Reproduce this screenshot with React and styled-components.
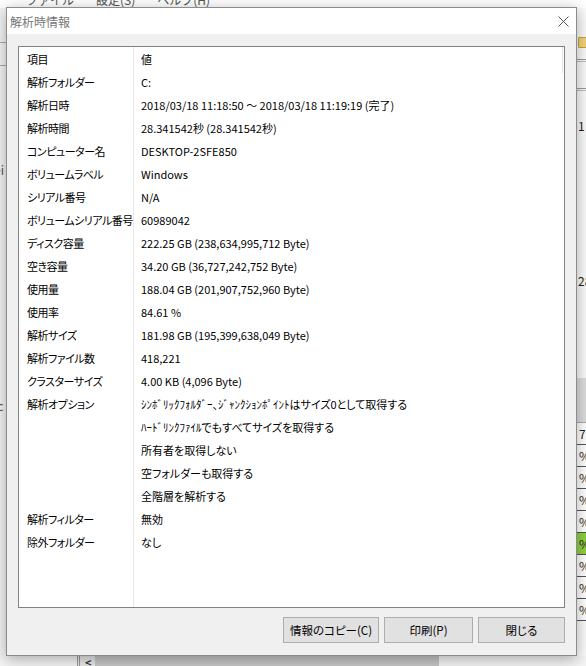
import React from "react";
import styled, { createGlobalStyle } from "styled-components";

const GlobalStyle = createGlobalStyle`
  html, body {
    margin: 0;
    padding: 0;
    background: #f0f0f0;
  }
  body {
    font-family: "Noto Sans CJK JP", "Noto Sans", sans-serif;
    font-size: 12px;
    color: #000;
  }
`;

const Desktop = styled.div`
  position: relative;
  width: 586px;
  height: 666px;
  overflow: hidden;
  background: #f0f0f0;
`;

// the application window sitting behind the dialog
const BackApp = styled.div`
  display: grid;
  grid-template-rows: 8px 1fr 10px;
  width: 100%;
  height: 100%;
`;

const MenuBar = styled.div`
  display: flex;
  gap: 22px;
  padding-left: 26px;
  background: #fff;
  color: #555;
  font-size: 12px;
  line-height: 12px;
  margin-top: -6px;
  height: 14px;
`;

const BackBody = styled.div`
  display: grid;
  grid-template-columns: 77px 1fr 12px;
  background: #f0f0f0;
`;

const LeftPane = styled.div`
  display: flex;
  flex-direction: column;
  border-right: 3px double #9a9a9a;
  background: #f4f4f4;
  padding-top: 30px;
  font-size: 12px;
  color: #555;
`;

const BackLine = styled.div`
  height: ${(p) => p.h || 1}px;
  margin-top: ${(p) => p.mt || 0}px;
  background: ${(p) => p.c || "#9a9a9a"};
`;

const LeftText = styled.div`
  margin-top: ${(p) => p.mt}px;
  margin-left: -6px;
  line-height: 14px;
`;

const MiddlePane = styled.div`
  background: #fff;
`;

const RightPane = styled.div`
  display: flex;
  flex-direction: column;
  background: #fafafa;
  font-size: 12px;
  color: #222;
  padding-top: 29px;
`;

const Folder = styled.div`
  width: 10px;
  height: 9px;
  margin-left: 4px;
  background: #f2d27a;
  border: 1px solid #c9a33b;
  border-radius: 1px;
`;

const RightText = styled.div`
  margin-top: ${(p) => p.mt || 0}px;
  padding-left: 4px;
  line-height: 14px;
`;

const Cell = styled.div`
  height: 21px;
  line-height: 21px;
  padding-left: 5px;
  border-bottom: 1px solid #555;
  background: ${(p) => (p.green ? "#8ed13f" : "#fff")};
`;

const Band = styled.div`
  height: 44px;
  margin-top: ${(p) => p.mt}px;
  background: #dcdcdc;
  border-bottom: 1px solid #aaa;
`;

const HScroll = styled.div`
  display: grid;
  grid-template-columns: 77px 18px 344px 1fr;
  background: #f4f4f4;
`;

const ScrollBtn = styled.div`
  border-left: 3px double #9a9a9a;
  color: #333;
  font-size: 11px;
  font-weight: bold;
  line-height: 12px;
  padding-left: 5px;
  background: #e8e8e8;
`;

const ScrollThumb = styled.div`
  background: #c6c6c6;
`;

// dialog
const Dialog = styled.div`
  position: absolute;
  left: 6px;
  top: 7px;
  width: 569px;
  height: 647px;
  display: flex;
  flex-direction: column;
  background: #f0f0f0;
  border: 1px solid #8c8c8c;
  box-shadow: 0 3px 14px rgba(0, 0, 0, 0.32);
`;

const TitleBar = styled.div`
  height: 26px;
  display: flex;
  align-items: center;
  justify-content: space-between;
  background: #fff;
  padding-left: 3px;
  padding-right: 0;
`;

const Title = styled.span`
  font-size: 12px;
  color: #777;
`;

const CloseButton = styled.button`
  width: 26px;
  height: 24px;
  display: flex;
  align-items: center;
  justify-content: center;
  border: none;
  background: transparent;
  padding: 0;
`;

const Client = styled.div`
  flex: 1;
  display: flex;
  flex-direction: column;
  padding: 12px 11px 12px 11px;
  gap: 9px;
`;

const ListView = styled.div`
  flex: 1;
  display: grid;
  grid-template-columns: 115px 1fr;
  background: #fff;
  border: 1px solid #828282;
  position: relative;
`;

const Column = styled.div`
  display: flex;
  flex-direction: column;
  padding-top: 1px;
  border-right: ${(p) => (p.divider ? "1px solid #e8e8e8" : "none")};
  margin-right: ${(p) => (p.last ? "1px" : 0)};
`;

const Row = styled.div`
  height: 23px;
  line-height: 23px;
  padding-left: ${(p) => (p.value ? 7 : 8)}px;
  white-space: nowrap;
  font-size: 11px;
  font-feature-settings: "palt";
  letter-spacing: ${(p) => (p.value ? "0" : "-0.5px")};
`;

const HeaderEdge = styled.div`
  position: absolute;
  right: 1px;
  top: 0;
  width: 1px;
  height: 26px;
  background: #e5e5e5;
`;

const ButtonBar = styled.div`
  display: flex;
  justify-content: flex-end;
  gap: 5px;
`;

const Button = styled.button`
  width: ${(p) => p.w}px;
  height: 26px;
  background: #e1e1e1;
  border: 1px solid #adadad;
  font-family: "Noto Sans CJK JP", "Noto Sans", sans-serif;
  font-size: 11.5px;
  font-feature-settings: "palt";
  color: #000;
  padding: 0;
`;

const rows = [
  ["項目", "値"],
  ["解析フォルダー", "C:"],
  ["解析日時", "2018/03/18 11:18:50 ～ 2018/03/18 11:19:19 (完了)"],
  ["解析時間", "28.341542秒 (28.341542秒)"],
  ["コンピューター名", "DESKTOP-2SFE850"],
  ["ボリュームラベル", "Windows"],
  ["シリアル番号", "N/A"],
  ["ボリュームシリアル番号", "60989042"],
  ["ディスク容量", "222.25 GB (238,634,995,712 Byte)"],
  ["空き容量", "34.20 GB (36,727,242,752 Byte)"],
  ["使用量", "188.04 GB (201,907,752,960 Byte)"],
  ["使用率", "84.61 %"],
  ["解析サイズ", "181.98 GB (195,399,638,049 Byte)"],
  ["解析ファイル数", "418,221"],
  ["クラスターサイズ", "4.00 KB (4,096 Byte)"],
  ["解析オプション", "ｼﾝﾎﾞﾘｯｸﾌｫﾙﾀﾞｰ、ｼﾞｬﾝｸｼｮﾝﾎﾟｲﾝﾄはサイズ0として取得する"],
  ["", "ﾊｰﾄﾞﾘﾝｸﾌｧｲﾙでもすべてサイズを取得する"],
  ["", "所有者を取得しない"],
  ["", "空フォルダーも取得する"],
  ["", "全階層を解析する"],
  ["解析フィルター", "無効"],
  ["除外フォルダー", "なし"],
];

function CloseIcon() {
  return (
    <svg width="11" height="11" viewBox="0 0 11 11">
      <path d="M0.5 0.5 L10.5 10.5 M10.5 0.5 L0.5 10.5" stroke="#555" strokeWidth="1" fill="none" />
    </svg>
  );
}

export default function App() {
  return (
    <Desktop>
      <GlobalStyle />
      <BackApp>
        <MenuBar>
          <span>ファイル</span>
          <span>設定(S)</span>
          <span>ヘルプ(H)</span>
        </MenuBar>
        <BackBody>
          <LeftPane>
            <BackLine mt={4} c="#aaa" />
            <BackLine mt={22} c="#aaa" />
            <LeftText mt={97}>ei</LeftText>
            <LeftText mt={222}>ic</LeftText>
          </LeftPane>
          <MiddlePane />
          <RightPane>
            <Folder />
            <BackLine mt={11} />
            <BackLine mt={1} c="#bbb" />
            <BackLine mt={26} />
            <BackLine mt={1} c="#bbb" />
            <RightText mt={28}>1</RightText>
            <RightText mt={141}>28</RightText>
            <Band mt={90} />
            <Cell>7</Cell>
            <Cell>%</Cell>
            <Cell>%</Cell>
            <Cell>%</Cell>
            <Cell>%</Cell>
            <Cell green>%</Cell>
            <Cell>%</Cell>
            <Cell>%</Cell>
            <Cell>%</Cell>
          </RightPane>
        </BackBody>
        <HScroll>
          <div />
          <ScrollBtn>&lt;</ScrollBtn>
          <ScrollThumb />
          <div />
        </HScroll>
      </BackApp>

      <Dialog>
        <TitleBar>
          <Title>解析時情報</Title>
          <CloseButton aria-label="閉じる">
            <CloseIcon />
          </CloseButton>
        </TitleBar>
        <Client>
          <ListView>
            <Column divider>
              {rows.map(([k], i) => (
                <Row key={i}>{k}</Row>
              ))}
            </Column>
            <Column last>
              {rows.map(([, v], i) => (
                <Row value key={i}>
                  {v}
                </Row>
              ))}
            </Column>
            <HeaderEdge />
          </ListView>
          <ButtonBar>
            <Button w={96}>情報のコピー(C)</Button>
            <Button w={89}>印刷(P)</Button>
            <Button w={87}>閉じる</Button>
          </ButtonBar>
        </Client>
      </Dialog>
    </Desktop>
  );
}
